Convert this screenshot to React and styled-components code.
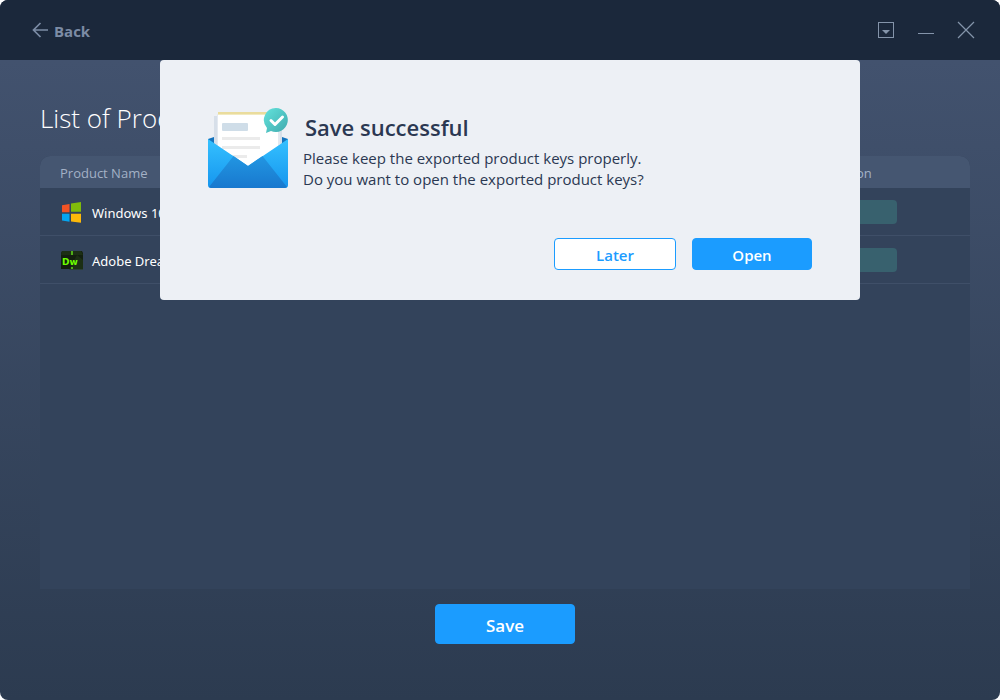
import styled, { createGlobalStyle } from 'styled-components'

const GlobalStyle = createGlobalStyle`
  * {
    box-sizing: border-box;
  }
  body {
    margin: 0;
    background-color: #fff;
    font-family: "Open Sans", "Noto Sans", sans-serif;
  }
`

const Window = styled.div`
  display: flex;
  flex-direction: column;
  min-height: 100vh;
  border-radius: 8px;
  overflow: hidden;
  background: linear-gradient(#1b283b 60px, #42526e 60px, #2c3b50 100%);
`
const TitleBar = styled.header`
  display: flex;
  align-items: center;
  justify-content: space-between;
  height: 60px;
  padding: 0 25px 0 32px;
  background-color: #1b283b;
`
const BackButton = styled.button`
  display: flex;
  align-items: center;
  gap: 6px;
  padding: 2px 0 0;
  border: none;
  background: transparent;
  color: #7c8ca5;
  font-family: inherit;
  font-size: 15px;
  font-weight: 700;
  line-height: 20px;
  cursor: pointer;
`
const WindowControls = styled.div`
  display: flex;
  gap: 22px;
`
const ControlButton = styled.button`
  display: flex;
  padding: 0;
  border: none;
  background: transparent;
  color: #8494aa;
  cursor: pointer;
`

const Page = styled.main`
  position: relative;
  flex: 1;
  display: flex;
  flex-direction: column;
  padding: 40px 30px 56px 40px;
`
const Title = styled.h1`
  margin: 0 0 20px;
  color: #fff;
  font-size: 26px;
  font-weight: 300;
  line-height: 36px;
`
const Panel = styled.section`
  flex: 1;
  margin-bottom: 15px;
  border-radius: 10px 10px 0 0;
  overflow: hidden;
  background-color: #33435b;
`
const Table = styled.table`
  width: 100%;
  border-collapse: separate;
  border-spacing: 0;
  table-layout: fixed;
`
const HeadCell = styled.th`
  width: ${props => props.$width || 'auto'};
  height: 32px;
  padding: ${props => (props.$center ? '2px 0 0 2px' : '2px 0 0 20px')};
  background-color: #455671;
  color: #a3b1c6;
  font-size: 13px;
  font-weight: 400;
  line-height: 20px;
  text-align: ${props => (props.$center ? 'center' : 'left')};
`
const Cell = styled.td`
  height: 48px;
  padding: 0 0 0 ${props => (props.$center ? '0' : '20px')};
  border-bottom: 1px solid #3f4f68;
  color: #fff;
  font-family: "Noto Sans", "Open Sans", sans-serif;
  font-size: 13px;
  text-align: ${props => (props.$center ? 'center' : 'left')};
`
const Product = styled.div`
  display: flex;
  align-items: center;
  gap: 8px;
  padding-top: 2px;
`
const CopyButton = styled.button`
  display: block;
  width: 114px;
  height: 24px;
  margin: 0 auto;
  border: none;
  border-radius: 4px;
  background-color: #38616e;
  color: #7fb0a8;
  font-family: inherit;
  font-size: 13px;
`

const Button = styled.button`
  width: ${props => props.$width || '120px'};
  height: ${props => (props.$large ? '40px' : '32px')};
  padding: 2px 0 0;
  border: 1px solid #1b9cff;
  border-radius: 4px;
  background-color: ${props => (props.$outline ? '#fff' : '#1b9cff')};
  color: ${props => (props.$outline ? '#1b9cff' : '#fff')};
  font-family: inherit;
  font-size: ${props => (props.$large ? '17px' : '15px')};
  font-weight: 600;
  cursor: pointer;
`
const SaveButton = styled(Button)`
  align-self: center;
`

const Dialog = styled.div`
  position: absolute;
  top: 0;
  left: 160px;
  right: 140px;
  padding: 48px 48px 30px;
  border-radius: 4px;
  background-color: #edf0f5;
  color: #2b3852;
`
const DialogBody = styled.div`
  display: flex;
  gap: 15px;
  margin-bottom: 48px;
`
const DialogTitle = styled.h2`
  margin: 3px 0 5px;
  padding-left: 2px;
  font-size: 22px;
  font-weight: 600;
  line-height: 32px;
`
const DialogText = styled.p`
  margin: 0;
  font-size: 15px;
  line-height: 21px;
`
const DialogActions = styled.div`
  display: flex;
  justify-content: flex-end;
  gap: 16px;
`

const BackIcon = () => (
  <svg width="16" height="18" viewBox="0 0 16 18" fill="none" stroke="currentColor" strokeWidth="1.7">
    <path d="M16 8H1.5M8.500 1L1.500 8l7 7" />
  </svg>
)

const WindowsIcon = () => (
  <svg width="24" height="24" viewBox="0 0 24 24">
    <path fill="#f25325" d="M2 4.2L9.500 3v8.200H2z" />
    <path fill="#80bb0a" d="M11 2.600L21 1v9.700H11z" />
    <path fill="#05a5f0" d="M2 12.700h7.500v8L2 19.600z" />
    <path fill="#fdb90a" d="M11 12.700h10v9l-10-1.200z" />
  </svg>
)

const DreamweaverIcon = () => (
  <svg width="24" height="24" viewBox="0 0 24 24">
    <path fill="#13200f" d="M2 2h20l1 2v16H1V4z" />
    <path fill="#243c19" d="M2 2h19l2 4H1zM17 6l6 5v10H9z" opacity=".55" />
    <path fill="#4fae18" d="M11 2h2v4h-2zM11 18h2v2h-2z" />
    <text x="2" y="16" fill="#6dff00" fontFamily="DejaVu Sans" fontSize="9" fontWeight="700">Dw</text>
  </svg>
)

const EnvelopeIcon = () => (
  <svg width="80" height="80" viewBox="0 0 80 80">
    <defs>
      <linearGradient id="side" x1="0" y1="0" x2="0" y2="1">
        <stop offset="0" stopColor="#35c1ff" />
        <stop offset="1" stopColor="#1595ee" />
      </linearGradient>
      <linearGradient id="flap" x1="0" y1="0" x2="0" y2="1">
        <stop offset="0" stopColor="#2296e2" />
        <stop offset="1" stopColor="#1878ce" />
      </linearGradient>
      <linearGradient id="badge" x1="0" y1="0" x2="1" y2="1">
        <stop offset="0" stopColor="#63e3dc" />
        <stop offset="1" stopColor="#3fa9ad" />
      </linearGradient>
    </defs>
    <path fill="#1573bd" d="M0 31l6-2h68l6 2v15H0z" />
    <path fill="#d7dfe9" d="M6 8h68v41H6z" />
    <path fill="#e4e9f0" d="M9 6h63v40H9z" />
    <path fill="#eadc9d" d="M10 4h60v6H10z" />
    <path fill="#fff" d="M10 7h60v51H10z" />
    <path fill="#f2eabf" d="M10 6h60v1H10z" />
    <rect x="14" y="15" width="26" height="8" rx="1" fill="#cfdde8" />
    <path fill="#ebebeb" d="M14 29h38v3H14zM14 38h38v3H14zM14 47h25v3H14z" />
    <path fill="url(#side)" d="M0 31l40 27 40-27v46a3 3 0 0 1-3 3H3a3 3 0 0 1-3-3z" />
    <path fill="url(#flap)" d="M25.500 48L40 58l14.500-10L79 79l-2 1H3l-2-1z" />
    <path fill="url(#badge)" d="M68 0a12 12 0 1 1-5 23l-5 2 1-5A12 12 0 0 1 68 0z" />
    <path fill="none" stroke="#fff" strokeWidth="3" strokeLinecap="round" strokeLinejoin="round" d="M63 12.500l4 4L74.500 9" />
  </svg>
)

const products = [
  { name: 'Windows 10', icon: <WindowsIcon /> },
  { name: 'Adobe Dreamweaver', icon: <DreamweaverIcon /> },
]

const App = () => {
  return (
    <>
      <GlobalStyle />
      <Window>
        <TitleBar>
          <BackButton>
            <BackIcon />
            Back
          </BackButton>
          <WindowControls>
            <ControlButton aria-label="Menu">
              <svg width="18" height="18" viewBox="0 0 18 18">
                <rect x="1.500" y="1.500" width="15" height="15" fill="none" stroke="currentColor" />
                <path fill="currentColor" d="M5 9h8l-4 4z" />
              </svg>
            </ControlButton>
            <ControlButton aria-label="Minimize">
              <svg width="18" height="18" viewBox="0 0 18 18">
                <path stroke="currentColor" d="M1 12.500h16" />
              </svg>
            </ControlButton>
            <ControlButton aria-label="Close">
              <svg width="18" height="18" viewBox="0 0 18 18">
                <path stroke="currentColor" strokeWidth="1.200" d="M1 1l16 16M17 1L1 17" />
              </svg>
            </ControlButton>
          </WindowControls>
        </TitleBar>

        <Page>
          <Title>List of Product Keys</Title>
          <Panel>
            <Table>
              <thead>
                <tr>
                  <HeadCell>Product Name</HeadCell>
                  <HeadCell $center $width="260px">Operation</HeadCell>
                </tr>
              </thead>
              <tbody>
                {products.map((p) => (
                  <tr key={p.name}>
                    <Cell>
                      <Product>
                        {p.icon}
                        {p.name}
                      </Product>
                    </Cell>
                    <Cell $center>
                      <CopyButton>Copy</CopyButton>
                    </Cell>
                  </tr>
                ))}
              </tbody>
            </Table>
          </Panel>
          <SaveButton $large $width="140px">Save</SaveButton>

          <Dialog role="dialog" aria-labelledby="dialog-title">
            <DialogBody>
              <EnvelopeIcon />
              <div>
                <DialogTitle id="dialog-title">Save successful</DialogTitle>
                <DialogText>Please keep the exported product keys properly.</DialogText>
                <DialogText>Do you want to open the exported product keys?</DialogText>
              </div>
            </DialogBody>
            <DialogActions>
              <Button $outline $width="122px">Later</Button>
              <Button>Open</Button>
            </DialogActions>
          </Dialog>
        </Page>
      </Window>
    </>
  )
}

export default App
